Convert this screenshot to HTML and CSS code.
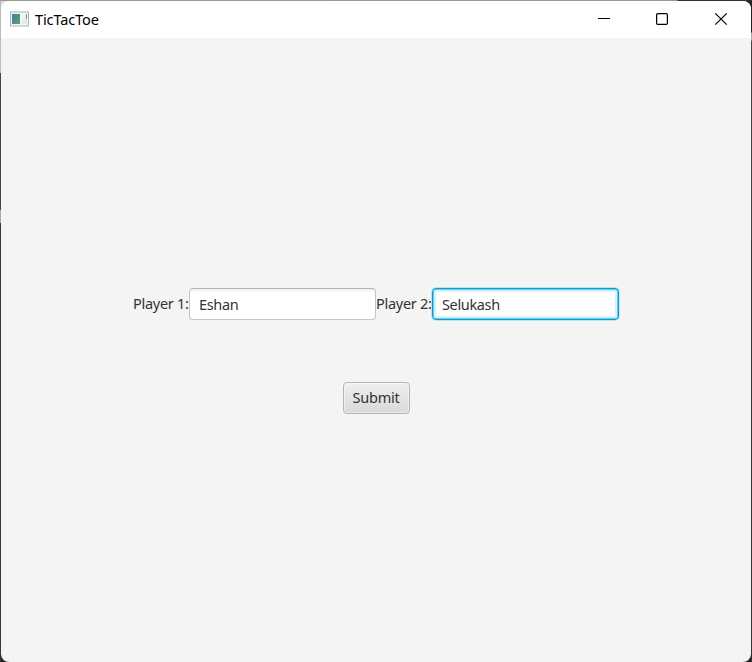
FILE: index.html
```html
<!DOCTYPE html>
<html lang="en">
<head>
<meta charset="utf-8">
<title>TicTacToe</title>
<link rel="stylesheet" href="styles.css">
</head>
<body>
<div class="window">
  <header class="titlebar">
    <svg class="app-icon" width="19" height="16" viewBox="0 0 19 16">
      <defs>
        <linearGradient id="pane" x1="0" y1="0" x2="1" y2="1"><stop offset="0" stop-color="#4778a0"/><stop offset="1" stop-color="#59a779"/></linearGradient>
        <linearGradient id="side" x1="0" y1="0" x2="1" y2="1"><stop offset="0" stop-color="#fafafa"/><stop offset="1" stop-color="#dfe2e2"/></linearGradient>
      </defs>
      <rect x=".5" y="1" width="18" height="14" fill="#f4f5f5" stroke="#aeb3b8"/>
      <rect x="2" y="3" width="8" height="10" fill="url(#pane)"/>
      <rect x="11" y="3" width="6" height="10" fill="url(#side)"/>
      <path d="M16.5 3v5" stroke="#63a390"/>
    </svg>
    <h1 class="title"><span>TicTacToe</span></h1>
    <div class="controls">
      <svg width="58" height="37" viewBox="0 0 58 37"><path d="M23 17.5h12" stroke="#000"/></svg>
      <svg width="58" height="37" viewBox="0 0 58 37"><rect x="23.6" y="12.6" width="10.8" height="10.8" rx="1.2" fill="none" stroke="#000" stroke-width="1.2"/></svg>
      <svg width="60" height="37" viewBox="0 0 60 37"><path d="M24.3 12.3l11.4 11.4M35.7 12.3L24.3 23.7" stroke="#000" stroke-width="1.2"/></svg>
    </div>
  </header>
  <main class="content">
    <div class="players">
      <label class="label"><span>Player 1:</span></label>
      <div class="field"><span>Eshan</span></div>
      <label class="label"><span>Player 2:</span></label>
      <div class="field focused"><span>Selukash</span></div>
    </div>
    <button class="submit"><span>Submit</span></button>
  </main>
</div>
</body>
</html>
```
FILE: styles.css
```css
* { box-sizing: border-box; }
body {
  margin: 0;
  height: 662px;
  padding: 1px;
  overflow: hidden;
  background:
    linear-gradient(90deg, #999 290px, #979797 677px, #333 678px) 0 0 / 100% 1px no-repeat,
    linear-gradient(#bbb 0 73px, #45464c 73px 210px, #aaa 210px 223px, #39393a 223px) 0 0 / 1px 100% no-repeat,
    linear-gradient(#ddd, #ddd) 0 0 / 12px 12px no-repeat,
    linear-gradient(#222 0 32px, #aaa 33px 40px, #444 41px 240px, #333 241px) 100% 0 / 1px 100% no-repeat,
    #222;
  font: 15px/20px "Noto Sans", "Open Sans", sans-serif;
  color: #333;
}
.window {
  width: 750px;
  height: 661px;
  background: #f4f4f4;
  border-radius: 8px;
  overflow: hidden;
}
.titlebar {
  display: flex;
  height: 37px;
  padding-left: 9px;
  background: #fff;
}
.app-icon { margin-top: 10px; }
.title {
  margin: 8px 0 0 6px;
  font-size: 14.5px;
  font-weight: 400;
  line-height: 20px;
  letter-spacing: -.1px;
  color: #000;
}
.controls { display: flex; margin-left: auto; }
.content {
  display: flex;
  flex-direction: column;
  align-items: center;
  gap: 62px;
  padding-top: 250px;
}
.players { display: flex; }
.label {
  width: 56px;
  padding-top: 5px;
  font-size: 14.5px;
  letter-spacing: -.28px;
  white-space: nowrap;
}
.field {
  width: 187px;
  height: 32px;
  padding: 5px 9px;
  border: 1px solid #c4c4c4;
  border-top-color: #b4b4b4;
  border-radius: 4px;
  background: linear-gradient(#f0f0f0, #fff 4px);
  font-size: 14.5px;
  letter-spacing: -.35px;
}
.focused {
  border-color: #039ed3;
  background: #fff;
  box-shadow: 0 0 0 1px #bfe3f0, inset 0 0 0 .5px #039ed3, inset 0 0 0 3px #d9f0f8;
}
.submit {
  width: 67px;
  height: 32px;
  padding: 0 0 2px;
  border: 1px solid #b5b5b5;
  border-radius: 4px;
  background: linear-gradient(#efefef, #d9d9d9);
  box-shadow: inset 0 0 0 1px rgba(255,255,255,.45);
  color: #333;
  font: 14.5px/20px "Noto Sans", "Open Sans", sans-serif;
  letter-spacing: -.25px;
}
```
